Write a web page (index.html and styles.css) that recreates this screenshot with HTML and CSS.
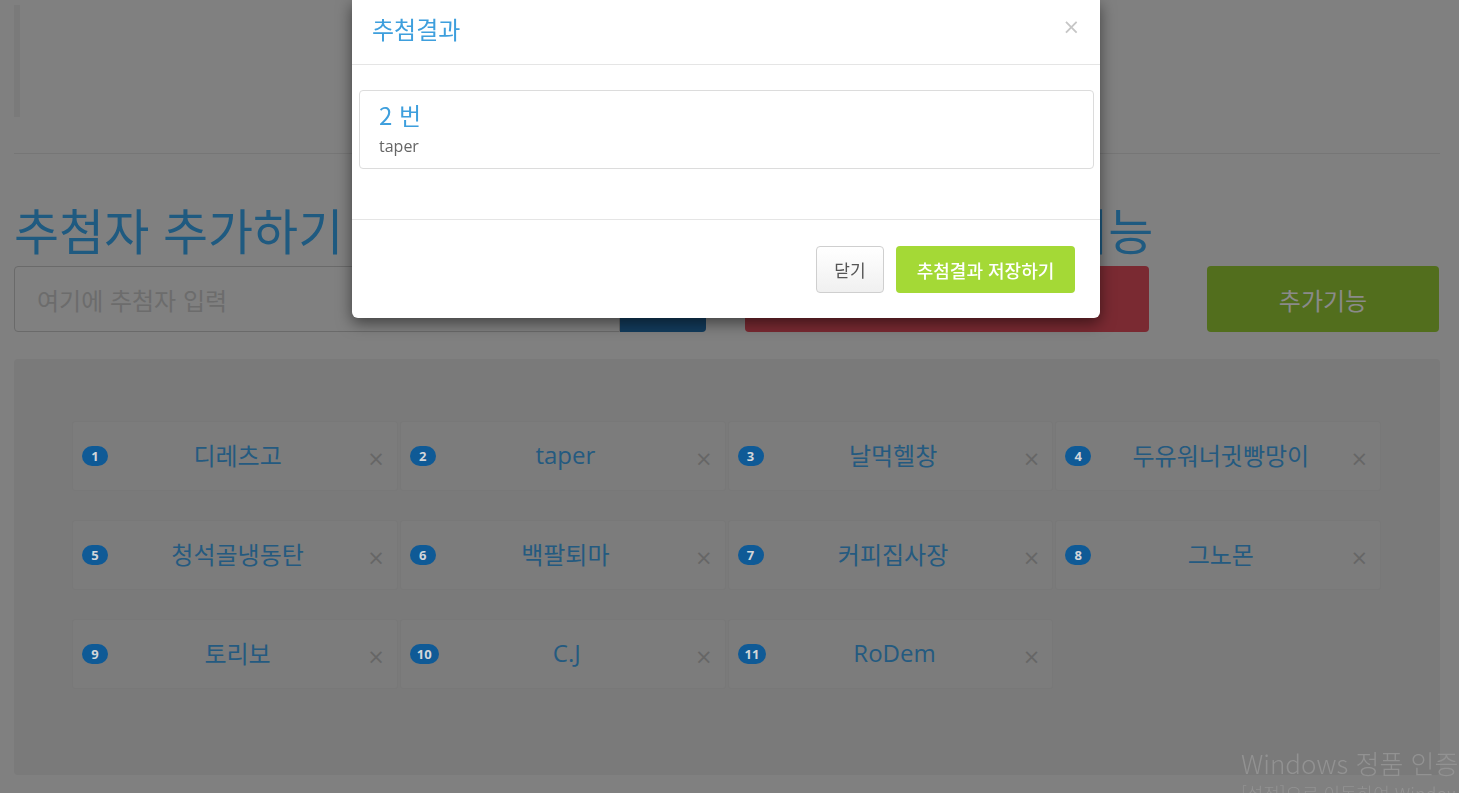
FILE: index.html
```html
<!DOCTYPE html>
<html lang="ko">
<head>
<meta charset="utf-8">
<title>추첨</title>
<link rel="stylesheet" href="styles.css">
</head>
<body>
<div class="page">
  <div class="intro"></div>
  <hr class="divider">
  <div class="head-row">
    <h2 class="heading heading-add">추첨자 추가하기</h2>
    <h2 class="heading heading-draw">추첨하기와 추가기능</h2>
  </div>
  <div class="ctrl-row">
    <div class="input-group">
      <input class="name-input" type="text" placeholder="여기에 추첨자 입력">
      <button class="btn-add">추가</button>
    </div>
    <button class="btn-draw">추첨하기</button>
    <button class="btn-extra">추가기능</button>
  </div>
  <div class="well">
    <div class="grid">
      <div class="card"><span class="badge">1</span><span class="name">디레츠고</span><span class="remove">×</span></div>
      <div class="card"><span class="badge">2</span><span class="name">taper</span><span class="remove">×</span></div>
      <div class="card"><span class="badge">3</span><span class="name">날먹헬창</span><span class="remove">×</span></div>
      <div class="card"><span class="badge">4</span><span class="name">두유워너귓빵망이</span><span class="remove">×</span></div>
      <div class="card"><span class="badge">5</span><span class="name">청석골냉동탄</span><span class="remove">×</span></div>
      <div class="card"><span class="badge">6</span><span class="name">백팔퇴마</span><span class="remove">×</span></div>
      <div class="card"><span class="badge">7</span><span class="name">커피집사장</span><span class="remove">×</span></div>
      <div class="card"><span class="badge">8</span><span class="name">그노몬</span><span class="remove">×</span></div>
      <div class="card"><span class="badge">9</span><span class="name">토리보</span><span class="remove">×</span></div>
      <div class="card"><span class="badge">10</span><span class="name">C.J</span><span class="remove">×</span></div>
      <div class="card"><span class="badge">11</span><span class="name">RoDem</span><span class="remove">×</span></div>
    </div>
  </div>
</div>

<div class="modal">
  <div class="modal-header">
    <h4 class="modal-title">추첨결과</h4>
    <span class="modal-close">×</span>
  </div>
  <div class="modal-body">
    <div class="result-panel">
      <div class="result-num">2 번</div>
      <div class="result-name">taper</div>
    </div>
  </div>
  <div class="modal-footer">
    <button class="btn-close">닫기</button>
    <button class="btn-save">추첨결과 저장하기</button>
  </div>
</div>

<div class="watermark">
  <div class="wm-title">Windows 정품 인증</div>
  <div class="wm-sub">[설정]으로 이동하여 Windows를 정품 인증합니다.</div>
</div>
</body>
</html>
```

FILE: styles.css
```css
* { box-sizing: border-box; }

html, body {
  margin: 0;
  height: 100%;
  overflow: hidden;
}

body {
  background: #808080;
  font-family: "Open Sans", "Noto Sans CJK KR", sans-serif;
  color: #2b2b2b;
}

.page {
  padding: 5px 19px 0 14px;
}

.intro {
  height: 112px;
  border-left: 6px solid #7a7a7a;
}

.divider {
  margin: 36px 0 0;
  border: 0;
  border-top: 1px solid #767676;
}

.head-row {
  display: flex;
  margin-top: 49px;
}

.heading {
  margin: 0;
  font-family: "Noto Sans CJK KR", sans-serif;
  font-weight: 400;
  font-size: 49px;
  line-height: 52px;
  color: #1f5a80;
  white-space: nowrap;
}

.heading-add { width: 720px; }

.ctrl-row {
  display: flex;
  margin-top: 11px;
  height: 66px;
}

.input-group {
  display: flex;
  width: 692px;
}

.name-input {
  flex: 1;
  min-width: 0;
  height: 66px;
  border: 1px solid #6a6a6a;
  border-radius: 4px 0 0 4px;
  background: #808080;
  padding: 0 22px;
  font-family: "Noto Sans CJK KR", sans-serif;
  font-size: 24px;
  color: #333;
  outline: none;
}

.name-input::placeholder { color: #6c6c6c; }

.btn-add {
  width: 86px;
  border: 0;
  border-radius: 0 4px 4px 0;
  background: #133c5d;
  color: #808080;
  font-family: "Noto Sans CJK KR", sans-serif;
  font-size: 24px;
}

.btn-draw {
  width: 404px;
  margin-left: 39px;
  border: 0;
  border-radius: 4px;
  background: #7a2a32;
  color: #808080;
  font-family: "Noto Sans CJK KR", sans-serif;
  font-size: 24px;
}

.btn-extra {
  width: 232px;
  margin-left: 58px;
  border: 0;
  border-radius: 4px;
  background: #526e1d;
  color: #8a8a8a;
  font-family: "Noto Sans CJK KR", sans-serif;
  font-size: 24px;
}

.well {
  margin-top: 27px;
  background: #7a7a7a;
  border-radius: 4px;
  padding: 62px 59px 86px 58px;
}

.grid {
  display: grid;
  grid-template-columns: repeat(4, 1fr);
  column-gap: 2px;
  row-gap: 29px;
}

.card {
  display: flex;
  height: 70px;
  background: #7c7c7c;
  border: 1px solid #787878;
  border-radius: 3px;
  padding: 0 14px 0 9px;
}

.badge {
  align-self: flex-start;
  margin-top: 24px;
  min-width: 26px;
  height: 20px;
  padding: 0 7px;
  border-radius: 10px;
  background: #0f5a96;
  color: #d2d6da;
  font-family: "Open Sans", sans-serif;
  font-weight: 700;
  font-size: 13px;
  line-height: 20px;
  text-align: center;
}

.name {
  flex: 1;
  align-self: center;
  margin-top: -3px;
  text-align: center;
  font-family: "Open Sans", "Noto Sans CJK KR", sans-serif;
  font-size: 24px;
  color: #245a80;
  white-space: nowrap;
}

.remove {
  align-self: center;
  margin-top: 6px;
  margin-right: -2px;
  font-family: "DejaVu Sans", sans-serif;
  font-size: 21px;
  line-height: 1;
  color: #666;
}

/* modal */
.modal {
  position: fixed;
  top: 0;
  left: 352px;
  width: 748px;
  background: #fff;
  border-radius: 0 0 6px 6px;
  box-shadow: 0 5px 15px rgba(0, 0, 0, 0.5);
}

.modal-header {
  display: flex;
  justify-content: space-between;
  align-items: flex-start;
  height: 65px;
  padding: 13px 20px 0 20px;
  border-bottom: 1px solid #e5e5e5;
}

.modal-title {
  margin: 0;
  font-family: "Noto Sans CJK KR", sans-serif;
  font-weight: 400;
  font-size: 24px;
  line-height: 32px;
  color: #3e9fdd;
}

.modal-close {
  margin-top: 2px;
  font-family: "DejaVu Sans", sans-serif;
  font-size: 21px;
  line-height: 24px;
  color: #c6c6c6;
}

.modal-body {
  padding: 25px 6px 50px 7px;
}

.result-panel {
  height: 79px;
  border: 1px solid #dcdcdc;
  border-radius: 4px;
  padding: 8px 19px;
}

.result-num {
  font-family: "Noto Sans CJK KR", sans-serif;
  font-size: 24px;
  line-height: 32px;
  color: #3e9fdd;
}

.result-name {
  margin-top: 4px;
  font-family: "Open Sans", sans-serif;
  font-size: 16px;
  line-height: 22px;
  color: #666;
}

.modal-footer {
  display: flex;
  justify-content: flex-end;
  gap: 12px;
  padding: 26px 25px 25px;
  border-top: 1px solid #e5e5e5;
}

.btn-close {
  width: 68px;
  height: 47px;
  padding: 0;
  border: 1px solid #cfcfcf;
  border-radius: 4px;
  background: linear-gradient(#ffffff, #f0f0f0);
  font-family: "Noto Sans CJK KR", sans-serif;
  font-size: 17px;
  color: #555;
}

.btn-save {
  width: 179px;
  height: 47px;
  padding: 0;
  border: 0;
  border-radius: 4px;
  background: #a4d936;
  font-family: "Noto Sans CJK KR", sans-serif;
  font-weight: 500;
  font-size: 18px;
  color: #fff;
}

.watermark {
  position: fixed;
  left: 1241px;
  top: 744px;
  color: #929292;
  font-family: "Noto Sans CJK KR", sans-serif;
  white-space: nowrap;
}

.wm-title {
  font-size: 26px;
  line-height: 38px;
  font-weight: 300;
}

.wm-sub {
  font-size: 18px;
  line-height: 22px;
  font-weight: 300;
}
```
